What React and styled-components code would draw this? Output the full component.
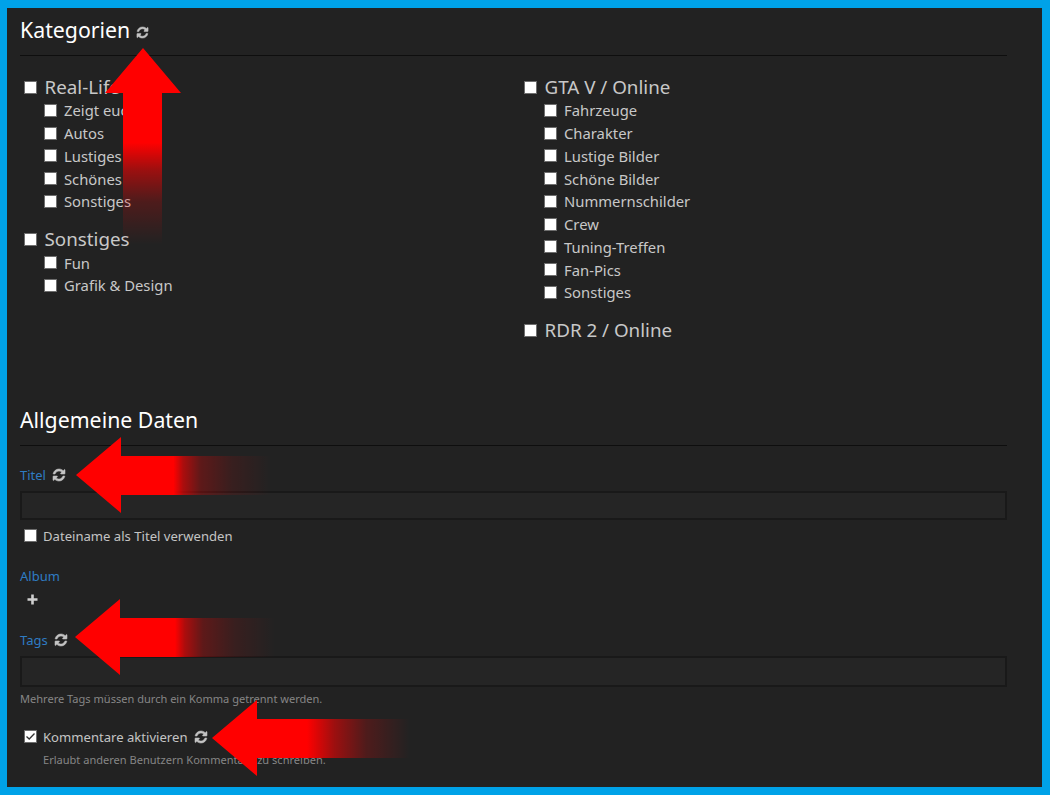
import React from "react";
import styled, { createGlobalStyle } from "styled-components";

const GlobalStyle = createGlobalStyle`
  html, body {
    margin: 0;
    padding: 0;
    background: #222;
  }
`;

const Frame = styled.div`
  position: relative;
  box-sizing: border-box;
  width: 1050px;
  height: 795px;
  overflow: hidden;
  border: 8px solid #00a2e8;
  border-left-width: 7px;
  padding: 0 35px 0 13px;
  background: #222;
  color: #c8c8c8;
  font-family: "Noto Sans", "Open Sans", sans-serif;
`;

const Heading = styled.h2`
  display: flex;
  align-items: center;
  gap: 6px;
  margin: ${(p) => p.$top || 0}px 0 0;
  padding: 7px 0 10px;
  height: 30px;
  font-size: 21.3px;
  font-weight: 400;
  line-height: 30px;
  color: #fff;
  border-bottom: 1px solid #0e0e0e;

  svg {
    width: 13px;
    height: 13px;
    margin-top: 4px;
  }
`;

const RefreshSvg = styled.svg`
  flex: none;
  display: block;
  width: 14px;
  height: 14px;
  fill: #c4c4c4;
  stroke: #c4c4c4;
  stroke-width: 70;
`;

const Refresh = () => (
  <RefreshSvg viewBox="0 0 1792 1792">
    <path d="M1639 1056q0 5-1 7-64 268-268 434.5t-478 166.5q-146 0-282.5-55t-243.5-157l-129 129q-19 19-45 19t-45-19-19-45v-448q0-26 19-45t45-19h448q26 0 45 19t19 45-19 45l-137 137q71 66 161 102t187 36q134 0 250-65t186-179q11-17 53-117 8-23 30-23h192q13 0 22.5 9.5t9.5 22.5zm25-800v448q0 26-19 45t-45 19h-448q-26 0-45-19t-19-45 19-45l138-138q-148-137-349-137-134 0-250 65t-186 179q-11 17-53 117-8 23-30 23h-199q-13 0-22.5-9.5t-9.5-22.5v-7q65-268 270-434.5t480-166.5q146 0 284 55.5t245 156.5l130-129q19-19 45-19t45 19 19 45z" />
  </RefreshSvg>
);

const Categories = styled.div`
  display: grid;
  grid-template-columns: 500px 487px;
  margin-top: 19px;
`;

const Group = styled.div`
  & + & {
    margin-top: 14.5px;
  }
`;

const TopCategory = styled.label`
  display: flex;
  align-items: center;
  gap: 7.5px;
  height: 24px;
  padding-left: 4px;
  font-size: 18.8px;
`;

const SubCategory = styled.label`
  display: flex;
  align-items: center;
  gap: 7px;
  height: 22.75px;
  padding-left: 24px;
  font-size: 14.8px;
`;

const Box = styled.span`
  flex: none;
  box-sizing: border-box;
  width: 13px;
  height: 13px;
  background: #fff;
  border: 1px solid #6e6e6e;
`;

const Tick = styled.svg`
  display: block;
  width: 11px;
  height: 11px;
`;

const Field = styled.div`
  display: flex;
  align-items: center;
  gap: 6px;
  height: 20px;
  margin-top: ${(p) => p.$top || 0}px;
`;

const Label = styled.span`
  font-size: 13px;
  color: #2f7cc2;
`;

const TextInput = styled.div`
  box-sizing: border-box;
  height: ${(p) => p.$height}px;
  margin-top: 6px;
  background: #252525;
  border: 2px solid #191919;
`;

const CheckRow = styled(Field)`
  padding-left: 4px;
  font-size: 13.1px;
  color: #c4c4c4;

  ${Box} {
    margin-top: -2px;
  }
`;

const CheckText = styled.span`
  display: inline-flex;
  align-items: center;
  gap: 7px;
`;

const AddButton = styled(Field)`
  padding-left: 7px;
`;

const PlusSvg = styled.svg`
  display: block;
  width: 11px;
  height: 11px;
  margin-top: -1px;
  fill: #cfcfcf;
`;

const Help = styled(Field)`
  padding-left: ${(p) => p.$indent || 0}px;
  font-size: 11.05px;
  color: #868686;
`;

const ArrowSvg = styled.svg`
  position: absolute;
  left: ${(p) => p.$x - 7}px;
  top: ${(p) => p.$y - 8}px;
  pointer-events: none;
`;

const QUICK_FADE = [
  [0.5, 1],
  [0.55, 0.62],
  [0.64, 0.27],
  [0.8, 0.1],
  [1, 0],
];

const SLOW_FADE = [
  [0.48, 1],
  [0.62, 0.55],
  [0.78, 0.2],
  [0.92, 0.07],
  [1, 0],
];

const Stops = ({ fade }) =>
  fade.map(([offset, opacity]) => (
    <stop key={offset} offset={offset} stopColor="#f00" stopOpacity={opacity} />
  ));

// left pointing arrow, solid near the head and fading out toward the tail
const LeftArrow = ({ x, y, length, id, fade = QUICK_FADE }) => (
  <ArrowSvg $x={x} $y={y} width={length} height={76} viewBox={`0 0 ${length} 76`}>
    <defs>
      <linearGradient id={id} x1="0" x2={length} y1="0" y2="0" gradientUnits="userSpaceOnUse">
        <Stops fade={fade} />
      </linearGradient>
    </defs>
    <path d={`M0 38 L45 0 V19 H${length} V58 H45 V76 Z`} fill={`url(#${id})`} />
  </ArrowSvg>
);

const UpArrow = ({ x, y }) => (
  <ArrowSvg $x={x} $y={y} width={76} height={197} viewBox="0 0 76 197">
    <defs>
      <linearGradient id="arrow-up" x1="0" x2="0" y1="0" y2="197" gradientUnits="userSpaceOnUse">
        <Stops fade={SLOW_FADE} />
      </linearGradient>
    </defs>
    <path d="M38 0 L76 45 H57 V197 H18 V45 H0 Z" fill="url(#arrow-up)" />
  </ArrowSvg>
);

const Check = ({ checked, children, ...rest }) => (
  <CheckRow {...rest}>
    <Box>
      {checked && (
        <Tick viewBox="0 0 11 11">
          <path d="M1.5 5.5 L4.2 8 L9.5 2.5" fill="none" stroke="#333" strokeWidth="1.3" />
        </Tick>
      )}
    </Box>
    <CheckText>{children}</CheckText>
  </CheckRow>
);

const CategoryGroup = ({ name, subs = [] }) => (
  <Group>
    <TopCategory>
      <Box />
      {name}
    </TopCategory>
    {subs.map((sub) => (
      <SubCategory key={sub}>
        <Box />
        {sub}
      </SubCategory>
    ))}
  </Group>
);

const App = () => (
  <Frame>
    <GlobalStyle />
    <Heading>
      Kategorien <Refresh />
    </Heading>
    <Categories>
      <div>
        <CategoryGroup
          name="Real-Life"
          subs={["Zeigt euch", "Autos", "Lustiges", "Schönes", "Sonstiges"]}
        />
        <CategoryGroup name="Sonstiges" subs={["Fun", "Grafik & Design"]} />
      </div>
      <div>
        <CategoryGroup
          name="GTA V / Online"
          subs={[
            "Fahrzeuge",
            "Charakter",
            "Lustige Bilder",
            "Schöne Bilder",
            "Nummernschilder",
            "Crew",
            "Tuning-Treffen",
            "Fan-Pics",
            "Sonstiges",
          ]}
        />
        <CategoryGroup name="RDR 2 / Online" />
      </div>
    </Categories>

    <Heading $top={55.75}>Allgemeine Daten</Heading>
    <Field $top={19}>
      <Label>Titel</Label>
      <Refresh />
    </Field>
    <TextInput $height={29} />
    <Check $top={6}>Dateiname als Titel verwenden</Check>
    <Field $top={20}>
      <Label>Album</Label>
    </Field>
    <AddButton $top={4}>
      <PlusSvg viewBox="0 0 11 11">
        <path d="M4.2 0.5h2.6v3.7h3.7v2.6H6.8v3.7H4.2V6.8H0.5V4.2h3.7z" />
      </PlusSvg>
    </AddButton>
    <Field $top={20}>
      <Label>Tags</Label>
      <Refresh />
    </Field>
    <TextInput $height={31} />
    <Help $top={1}>Mehrere Tags müssen durch ein Komma getrennt werden.</Help>
    <Check $top={19} checked>
      Kommentare aktivieren <Refresh />
    </Check>
    <Help $top={2} $indent={23}>
      Erlaubt anderen Benutzern Kommentare zu schreiben.
    </Help>

    <UpArrow x={105} y={48} />
    <LeftArrow id="arrow-titel" x={76} y={437} length={195} />
    <LeftArrow id="arrow-tags" x={75} y={599} length={200} />
    <LeftArrow id="arrow-kommentare" x={212} y={700} length={198} fade={SLOW_FADE} />
  </Frame>
);

export default App;
